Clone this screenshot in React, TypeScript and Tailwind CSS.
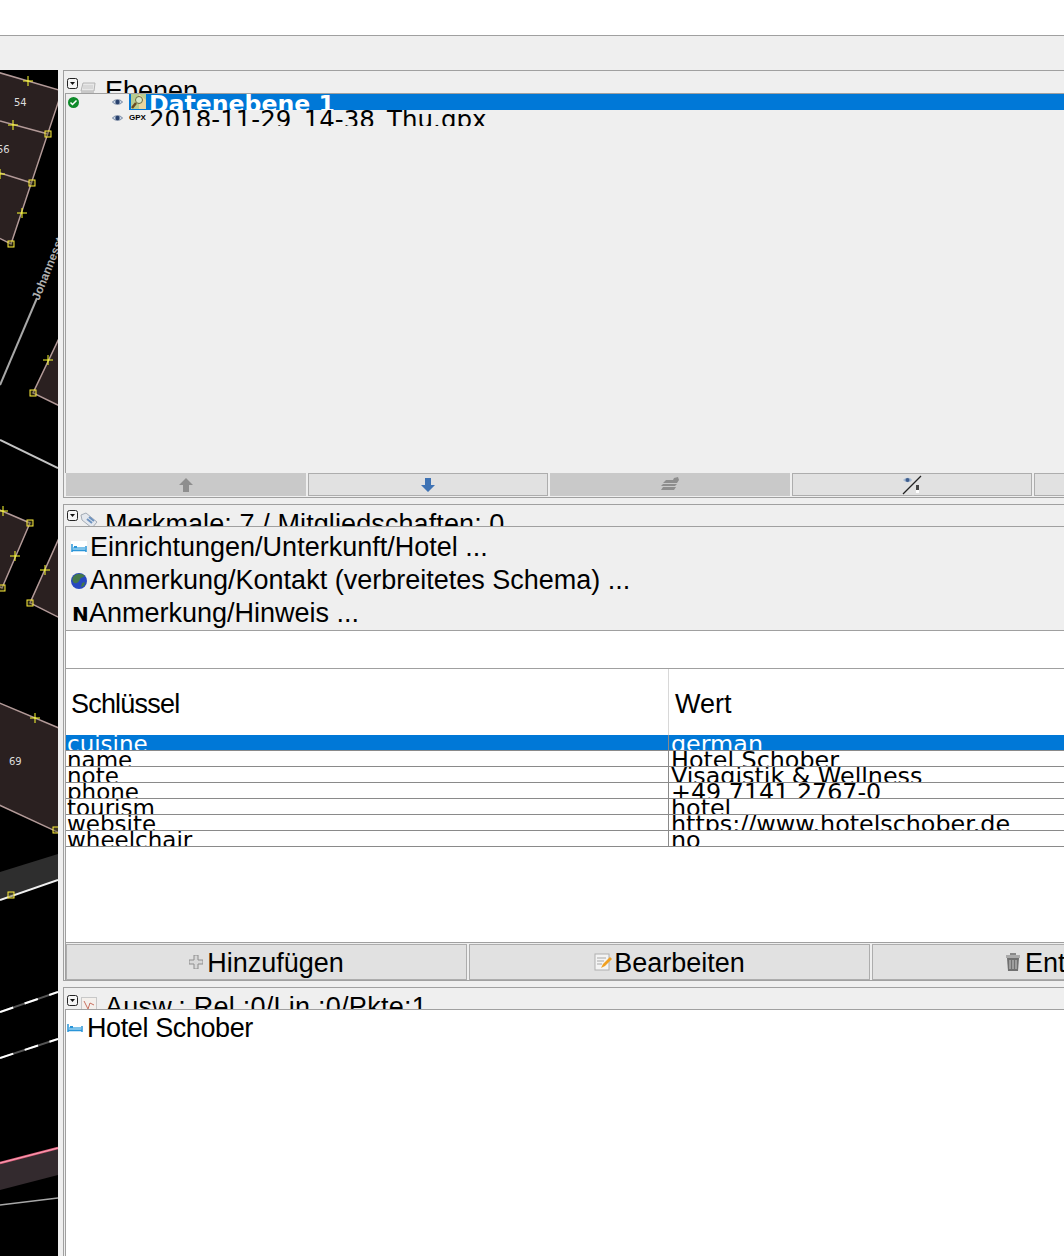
const ui = "font-['Liberation_Sans',sans-serif]";
const dv = "font-['DejaVu_Sans',sans-serif]";

function Toggle() {
  return (
    <svg width="11" height="11" viewBox="0 0 11 11" className="shrink-0">
      <rect x="0.5" y="0.5" width="10" height="10" rx="2" fill="#f4f4f4" stroke="#222" />
      <path d="M3 4h5L5.5 7z" fill="#111" />
    </svg>
  );
}

function Eye() {
  return (
    <svg width="11" height="8" viewBox="0 0 11 8">
      <path d="M0.5 4C2.5 1 8.500 1 10.500 4C8.500 7 2.500 7 0.500 4z" fill="#c8d4e4" stroke="#5a6f8e" strokeWidth="0.8" />
      <circle cx="5.500" cy="4" r="2.200" fill="#27406c" />
    </svg>
  );
}

function Bed({ bg = true }: { bg?: boolean }) {
  return (
    <svg width="16" height="14" viewBox="0 0 16 14" className="shrink-0">
      {bg && <rect width="16" height="14" fill="#ffffff" />}
      <path d="M1 3v8M15 5v6M1 9.500h14" stroke="#2a95d8" strokeWidth="1.500" fill="none" />
      <rect x="2" y="6" width="12" height="3" fill="#7cc2ea" />
      <rect x="3" y="5" width="3" height="2" fill="#2a95d8" />
    </svg>
  );
}

function Globe() {
  return (
    <svg width="16" height="16" viewBox="0 0 16 16" className="shrink-0">
      <circle cx="8" cy="8" r="8" fill="#2748c0" />
      <path d="M2 4C5 0 11 0 14 3C12 5 10 4 9 6C8 9 6 11 3 10C1 8 1 6 2 4z" fill="#44784a" />
      <path d="M11 10l3-1-1 4-3 1z" fill="#44784a" />
    </svg>
  );
}

function Tag() {
  return (
    <svg width="19" height="17" viewBox="0 0 19 17" className="shrink-0">
      <path d="M1 3l5-2 11 9-5 6L2 8z" fill="#e4e8ee" stroke="#a4acb6" />
      <path d="M7 7l5 4M9 5l5 4" stroke="#6e93c0" strokeWidth="2" />
    </svg>
  );
}

function Btn({ w, off, children }: { w: string; off?: boolean; children?: React.ReactNode }) {
  return (
    <div className={`${w} shrink-0 h-full flex items-center justify-center border ${off ? "bg-[#c9c9c9] border-[#c9c9c9]" : "bg-[#e1e1e1] border-[#adadad]"}`}>
      {children}
    </div>
  );
}

const rows: [string, string][] = [
  ["cuisine", "german"],
  ["name", "Hotel Schober"],
  ["note", "Visagistik & Wellness"],
  ["phone", "+49 7141 2767-0"],
  ["tourism", "hotel"],
  ["website", "https://www.hotelschober.de"],
  ["wheelchair", "no"],
];

function MapView() {
  const sq = [[48, 134], [32, 183], [11, 244], [33, 393], [30, 523], [2, 588], [30, 603], [56, 830], [11, 895]];
  const cr = [[28, 81], [13, 125], [22, 213], [0, 174], [48, 360], [3, 511], [15, 556], [45, 570], [35, 718]];
  return (
    <svg width="58" height="1186" viewBox="0 70 58 1186" className="block shrink-0 bg-black">
      <g fill="#2a2020" stroke="#b39a98" strokeWidth="1.500">
        <path d="M-3 72L62 91L11 244L-3 237z" />
        <path d="M0 121L48 134M0 173L32 183" fill="none" />
        <path d="M64 328L33 393L64 408z" />
        <path d="M-5 508L30 523L2 588L-5 585z" />
        <path d="M64 527L30 603L64 620z" />
        <path d="M-3 702L66 731V836L-3 804z" />
      </g>
      <path d="M0 872L58 854V880L0 900z" fill="#2e2e2e" />
      <path d="M0 900L58 880" stroke="#f0f0f0" strokeWidth="2" />
      <path d="M0 385L37 298" stroke="#a8a8a8" strokeWidth="2" />
      <path d="M0 440L58 468" stroke="#c4c4c4" strokeWidth="2" />
      <path d="M0 1012L58 992M0 1058L58 1039" stroke="#555" strokeWidth="2" />
      <path d="M0 1012L58 992M0 1058L58 1039" stroke="#fff" strokeWidth="2" strokeDasharray="14 12" />
      <path d="M0 1163L58 1148V1175L0 1190z" fill="#332a2e" />
      <path d="M0 1163L58 1148" stroke="#e2607e" strokeWidth="2.500" />
      <path d="M0 1163L58 1148" stroke="#ffb4c4" strokeWidth="0.800" />
      <path d="M0 1205L58 1198" stroke="#a8a8a8" strokeWidth="1.500" />
      {sq.map(([x, y], i) => (
        <rect key={i} x={x - 3} y={y - 3} width="6" height="6" fill="#5a5420" fillOpacity="0.4" stroke="#ffef3c" />
      ))}
      {cr.map(([x, y], i) => (
        <path key={i} d={`M${x - 5} ${y}H${x + 5}M${x} ${y - 5}V${y + 5}`} stroke="#ffff30" strokeWidth="1" />
      ))}
      <g fill="#ddd" fontSize="10" fontFamily="DejaVu Sans">
        <text x="14" y="106">54</text>
        <text x="-3" y="153">56</text>
        <text x="9" y="765">69</text>
      </g>
      <text transform="translate(39 301) rotate(-68)" fill="#b0b0b0" fontSize="12" fontWeight="700" fontFamily="Liberation Sans">Johannesstr</text>
    </svg>
  );
}

export default function App() {
  return (
    <div className={`w-[1064px] h-[1256px] overflow-hidden bg-[#efefef] text-black ${ui}`}>
      <div className="h-[35px] bg-white border-b border-[#a0a0a0] box-content" />
      <div className="h-[34px]" />
      <div className="flex h-[1186px]">
        <MapView />
        <div className="w-[5px] shrink-0" />
        <div className="flex-1 min-w-0 flex flex-col overflow-hidden">
          {/* Ebenen */}
          <section className="h-[428px] shrink-0 border-t border-l border-b border-[#a0a0a0] flex flex-col w-[1100px]">
            <div className="h-[22px] shrink-0 flex items-start overflow-hidden pl-[3px]">
              <div className="pt-[7px]"><Toggle /></div>
              <svg width="16" height="12" viewBox="0 0 16 12" className="ml-[2px] mt-[11px] shrink-0">
                <path d="M3 1h12l-1 8H1z" fill="#e8e8e8" stroke="#b4b4b4" />
                <path d="M3 4h10M3 6h10" stroke="#c8c8c8" />
                <path d="M1 9h13v2H1z" fill="#c8c8c8" />
              </svg>
              <span className="ml-[9px] text-[27px] leading-[41px] whitespace-nowrap">Ebenen</span>
            </div>
            <div className="flex-1 min-h-0 ml-px border-t border-l border-[#a0a0a0] flex flex-col">
              <div className="h-[16px] flex items-center overflow-hidden">
                <svg width="11" height="11" viewBox="0 0 11 11" className="ml-[2px] shrink-0">
                  <circle cx="5.500" cy="5.500" r="5.500" fill="#0e8a2a" />
                  <path d="M2.500 5.500l2 2 4-4" stroke="#fff" strokeWidth="1.500" fill="none" />
                </svg>
                <div className="ml-[31px] w-[15px] flex justify-center -mt-[1px]"><Eye /></div>
                <div className="ml-[4px] flex-1 h-full bg-[#0078d7] flex overflow-hidden">
                  <svg width="17" height="16" viewBox="0 0 17 16" className="shrink-0 ml-[1px]">
                    <rect x="1" y="0" width="15" height="15" fill="#b8cc90" />
                    <path d="M9 0l7 6v9H9z" fill="#e8d6a0" />
                    <circle cx="9" cy="6" r="3.500" fill="#d8e8c8" stroke="#6a6a40" />
                    <path d="M6 9l-4 5" stroke="#6a4a20" strokeWidth="2.500" />
                  </svg>
                  <span className={`ml-[2px] font-bold text-[23.600px] leading-[20px] text-white whitespace-nowrap ${dv}`}>Datenebene 1</span>
                </div>
              </div>
              <div className="h-[16px] flex items-center overflow-hidden">
                <div className="ml-[44px] w-[15px] flex justify-center"><Eye /></div>
                <span className="ml-[4px] w-[20px] font-bold text-[8px] leading-[16px]">GPX</span>
                <span className={`text-[24.500px] leading-[20px] h-full whitespace-nowrap ${dv}`}>2018-11-29_14-38_Thu.gpx</span>
              </div>
            </div>
            <div className="h-[23px] shrink-0 ml-[2px] mb-[1px] flex gap-[2px]">
              <Btn w="w-[240px]" off>
                <svg width="14" height="14" viewBox="0 0 14 14"><path d="M7 0l7 7h-4v7H4V7H0z" fill="#8e8e8e" /></svg>
              </Btn>
              <Btn w="w-[240px]">
                <svg width="14" height="14" viewBox="0 0 14 14"><path d="M4 0h6v7h4l-7 7-7-7h4z" fill="#3f73b4" /></svg>
              </Btn>
              <Btn w="w-[240px]" off>
                <svg width="20" height="16" viewBox="0 0 20 16" fill="#8e8e8e"><path d="M3 6l3-3h7l1-2 4-1 1 3-2 3H2zM1 9l2-2h14l-2 2zM1 13l2-3h13l-2 3z" /></svg>
              </Btn>
              <Btn w="w-[240px]">
                <svg width="20" height="20" viewBox="0 0 20 20">
                  <path d="M1 19L19 1" stroke="#222" strokeWidth="1.200" />
                  <path d="M1 5C4 2 8 2 10 5C8 8 4 8 1 5z" fill="#a8bcd4" />
                  <circle cx="5.500" cy="5" r="2" fill="#3f5e8e" />
                  <rect x="14" y="10" width="3" height="5" fill="#444" />
                  <rect x="14" y="15" width="3" height="3" fill="#fff" />
                </svg>
              </Btn>
              <Btn w="w-[240px]" />
            </div>
          </section>
          <div className="h-[6px] shrink-0" />
          {/* Merkmale */}
          <section className="h-[477px] shrink-0 border-t border-l border-b border-[#a0a0a0] flex flex-col w-[1100px]">
            <div className="h-[21px] shrink-0 flex items-start overflow-hidden pl-[3px]">
              <div className="pt-[5px]"><Toggle /></div>
              <div className="mt-[7px] ml-[2px]"><Tag /></div>
              <span className="ml-[6px] text-[27px] leading-[39px] whitespace-nowrap tracking-[0.1px]">Merkmale: 7 / Mitgliedschaften: 0</span>
            </div>
            <div className="flex-1 min-h-0 ml-px border-t border-l border-[#a0a0a0] flex flex-col bg-white">
              <div className="h-[103px] shrink-0 bg-[#efefef] flex flex-col pt-[4px] text-[27px]">
                <div className="h-[33px] flex items-center pl-[5px] gap-[3px] whitespace-nowrap"><Bed /><span>Einrichtungen/Unterkunft/Hotel ...</span></div>
                <div className="h-[33px] flex items-center pl-[5px] gap-[3px] whitespace-nowrap"><Globe /><span>Anmerkung/Kontakt (verbreitetes Schema) ...</span></div>
                <div className="h-[33px] flex items-center pl-[6px] gap-[2px] whitespace-nowrap">
                  <span className={`w-[15px] font-bold text-[20px] leading-[20px] text-center ${dv}`}>N</span>
                  <span>Anmerkung/Hinweis ...</span>
                </div>
              </div>
              <div className="h-[39px] shrink-0 border-y border-[#a0a0a0] bg-white" />
              <div className="h-[66px] shrink-0 flex text-[27px] items-stretch">
                <div className="w-[603px] shrink-0 pl-[5px] flex items-center border-r border-[#d8d8d8] pt-[4px] tracking-[-0.8px]">Schlüssel</div>
                <div className="pl-[6px] flex items-center pt-[4px]">Wert</div>
              </div>
              <div className={`shrink-0 ${dv}`}>
                {rows.map(([k, v], i) => (
                  <div key={k} className={`flex overflow-hidden ${i === 0 ? "bg-[#0078d7] text-white h-[15px]" : "border-t border-[#8a8a8a]"} ${i > 0 && i < rows.length - 1 ? "h-[16px]" : ""} ${i === rows.length - 1 ? "h-[17px] border-b" : ""}`}>
                    <div className="w-[603px] shrink-0 pl-[1px] text-[23px] leading-[18px] whitespace-nowrap border-r border-[#8a8a8a]">{k}</div>
                    <div className="pl-[2px] text-[23.800px] leading-[18px] whitespace-nowrap">{v}</div>
                  </div>
                ))}
              </div>
              <div className="flex-1 min-h-0" />
              <div className="h-[38px] shrink-0 border-t border-[#a0a0a0] bg-[#efefef] pt-[1px] flex gap-[2px] text-[27px]">
                <Btn w="w-[401px]">
                  <svg width="14" height="14" viewBox="0 0 14 14" className="mr-[4px]"><path d="M5 0h4v5h5v4H9v5H5V9H0V5h5z" fill="#d8d8d8" stroke="#8e8e8e" /></svg>
                  <span className="pt-[2px]">Hinzufügen</span>
                </Btn>
                <Btn w="w-[401px]">
                  <svg width="18" height="18" viewBox="0 0 18 18" className="mr-[2px]">
                    <rect x="1" y="1" width="14" height="16" fill="#f4f4f4" stroke="#b0b0b0" />
                    <path d="M3 5h9M3 8h7M3 11h5" stroke="#a8a8a8" />
                    <path d="M7 15l2-4 7-7 2 2-7 7z" fill="#f0a020" />
                  </svg>
                  <span className="pt-[2px]">Bearbeiten</span>
                </Btn>
                <Btn w="w-[401px]">
                  <div className="w-full flex pl-[133px] items-center whitespace-nowrap">
                    <svg width="14" height="18" viewBox="0 0 14 18" className="mr-[5px] shrink-0">
                      <rect x="4" y="0" width="6" height="3" fill="#888" />
                      <rect x="0" y="2" width="14" height="3" fill="#aaa" />
                      <path d="M1 5h12l-1 13H2z" fill="#707070" />
                      <path d="M4 7v9M7 7v9M10 7v9" stroke="#ccc" />
                    </svg>
                    <span className="pt-[2px]">Entfernen</span>
                  </div>
                </Btn>
              </div>
            </div>
          </section>
          <div className="h-[6px] shrink-0" />
          {/* Auswahl */}
          <section className="flex-1 min-h-0 border-t border-l border-[#a0a0a0] flex flex-col w-[1100px]">
            <div className="h-[21px] shrink-0 flex items-start overflow-hidden pl-[3px]">
              <div className="pt-[7px]"><Toggle /></div>
              <svg width="16" height="16" viewBox="0 0 16 16" className="mt-[9px] ml-[3px] shrink-0">
                <rect x="0.500" y="0.500" width="15" height="15" fill="#f4f0ec" stroke="#c8c8c8" />
                <path d="M3 4l4 8 2-6 4 2" stroke="#c87060" fill="none" />
              </svg>
              <span className="ml-[8px] text-[27px] leading-[39px] whitespace-nowrap tracking-[0.25px]">Ausw.: Rel.:0/Lin.:0/Pkte:1</span>
            </div>
            <div className="flex-1 min-h-0 ml-px border-t border-l border-[#a0a0a0] bg-white">
              <div className="flex items-center h-[36px] text-[27px] pl-[1px] gap-[4px] whitespace-nowrap">
                <Bed bg={false} />
                <span className="tracking-[-0.4px]">Hotel Schober</span>
              </div>
            </div>
          </section>
        </div>
      </div>
    </div>
  );
}
